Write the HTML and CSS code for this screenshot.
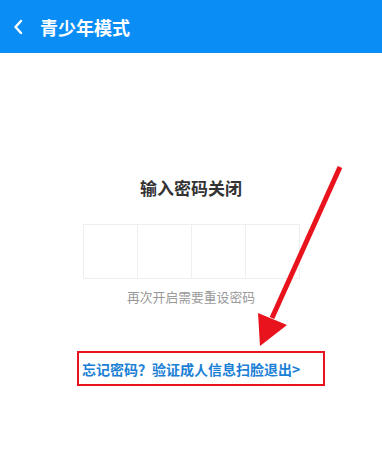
FILE: index.html
```html
<!DOCTYPE html>
<html lang="zh-CN">
<head>
    <meta charset="UTF-8">
    <meta name="viewport" content="width=device-width, initial-scale=1.0">
    <title>青少年模式</title>
    <link rel="stylesheet" href="styles.css">
</head>
<body>
    <div class="header">
        <svg class="back" width="10" height="16" viewBox="0 0 10 16">
            <path d="M8 2 L2.5 8 L8 14" fill="none" stroke="#fff" stroke-width="2.4" stroke-linecap="round" stroke-linejoin="round"/>
        </svg>
        <span class="header-title">青少年模式</span>
    </div>

    <div class="content">
        <h3 class="title">输入密码关闭</h3>
        <div class="code-boxes">
            <div class="code-box"></div>
            <div class="code-box"></div>
            <div class="code-box"></div>
            <div class="code-box"></div>
        </div>
        <p class="hint">再次开启需要重设密码</p>
        <div class="forgot">忘记密码？验证成人信息扫脸退出&gt;</div>
    </div>

    <!-- 红色标注箭头 -->
    <svg class="arrow" width="382" height="459" viewBox="0 0 382 459">
        <line x1="340" y1="167" x2="272" y2="318" stroke="#e8131c" stroke-width="5"/>
        <polygon points="258,313 287,325 260,346" fill="#e8131c"/>
    </svg>
</body>
</html>
```

FILE: styles.css
```css
html, body {
    margin: 0;
    padding: 0;
    background: #fff;
    font-family: "Noto Sans CJK SC", "Noto Sans", sans-serif;
}

body {
    position: relative;
    width: 382px;
    height: 459px;
    overflow: hidden;
}

/* 顶部蓝色标题栏 */
.header {
    height: 53px;
    background: #0a8ef6;
    display: flex;
    align-items: center;
    padding-left: 13px;
    box-sizing: border-box;
}

.back {
    display: block;
}

.header-title {
    margin-left: 17px;
    color: #fff;
    font-size: 18px;
    font-weight: bold;
}

.content {
    display: flex;
    flex-direction: column;
    align-items: center;
}

.title {
    margin: 123px 0 0;
    font-size: 17px;
    font-weight: bold;
    color: #333;
    line-height: 24px;
}

.code-boxes {
    display: flex;
    margin-top: 24px;
    border: 1px solid #efefef;
}

.code-box {
    width: 53px;
    height: 53px;
    border-left: 1px solid #efefef;
}

.code-box:first-child {
    border-left: none;
}

.hint {
    margin: 9px 0 0;
    font-size: 12.8px;
    color: #999;
    line-height: 18px;
}

/* 被红框圈出的链接 */
.forgot {
    margin-top: 45px;
    margin-left: 20px;
    width: 248px;
    height: 35px;
    box-sizing: border-box;
    border: 2.5px solid #e8131c;
    padding-left: 3px;
    display: flex;
    align-items: center;
    font-size: 14px;
    font-weight: bold;
    color: #1b7fd6;
    white-space: nowrap;
}

.arrow {
    position: absolute;
    left: 0;
    top: 0;
    pointer-events: none;
}
```
